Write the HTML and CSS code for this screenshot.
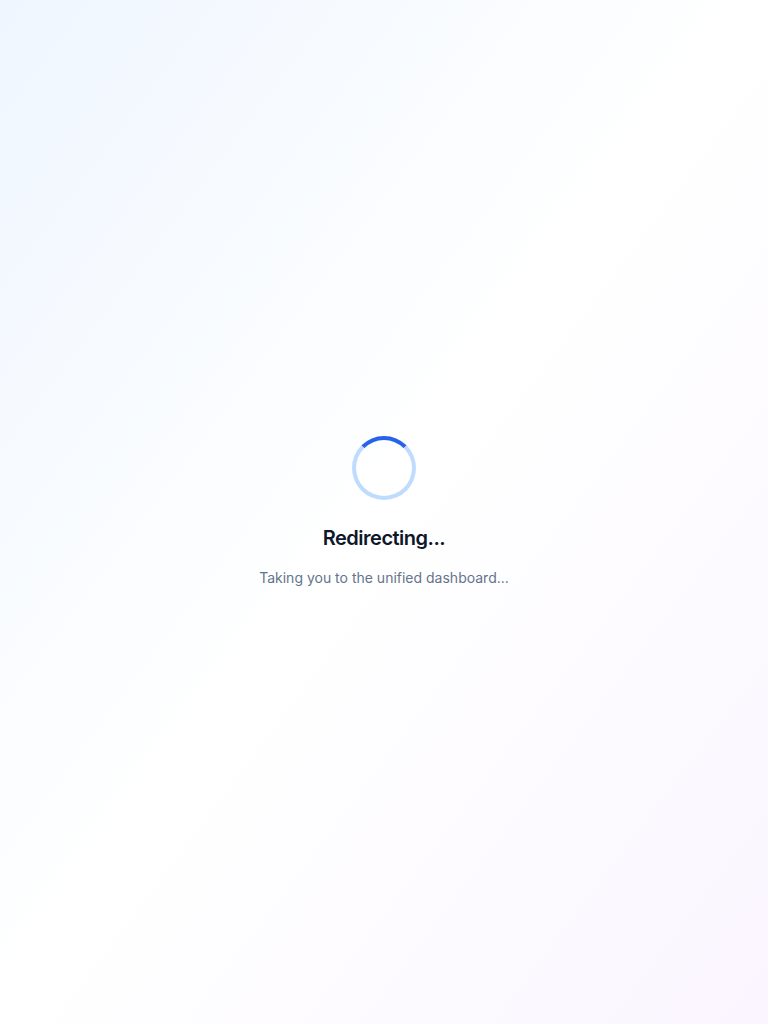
FILE: index.html
```html
<!DOCTYPE html>
<html lang="en">
<head>
<meta charset="utf-8">
<title>Redirecting...</title>
<link rel="stylesheet" href="styles.css">
</head>
<body>
<main class="page">
  <div class="content">
    <div class="spinner" role="status" aria-label="Loading"></div>
    <h1 class="title">Redirecting...</h1>
    <p class="subtitle">Taking you to the unified dashboard...</p>
  </div>
</main>
</body>
</html>
```

FILE: styles.css
```css
* { box-sizing: border-box; }
html, body { margin: 0; padding: 0; }
body {
  font-family: Inter, "Noto Sans", "Liberation Sans", sans-serif;
  -webkit-font-smoothing: antialiased;
}
.page {
  min-height: 100vh;
  display: flex;
  align-items: center;
  justify-content: center;
  background: linear-gradient(to bottom right, #eff6ff, #ffffff, #faf5ff);
}
.content {
  display: flex;
  flex-direction: column;
  align-items: center;
  text-align: center;
}
.spinner {
  width: 64px;
  height: 64px;
  border-radius: 50%;
  border: 4px solid #bfdbfe;
  border-top-color: #2563eb;
  margin-bottom: 24px;
}
.title {
  margin: 0 0 16px;
  font-size: 20px;
  line-height: 28px;
  font-weight: 600;
  letter-spacing: -0.5px;
  color: #0f172a;
}
.subtitle {
  margin: 0;
  font-size: 14px;
  line-height: 20px;
  color: #64748b;
}
```
